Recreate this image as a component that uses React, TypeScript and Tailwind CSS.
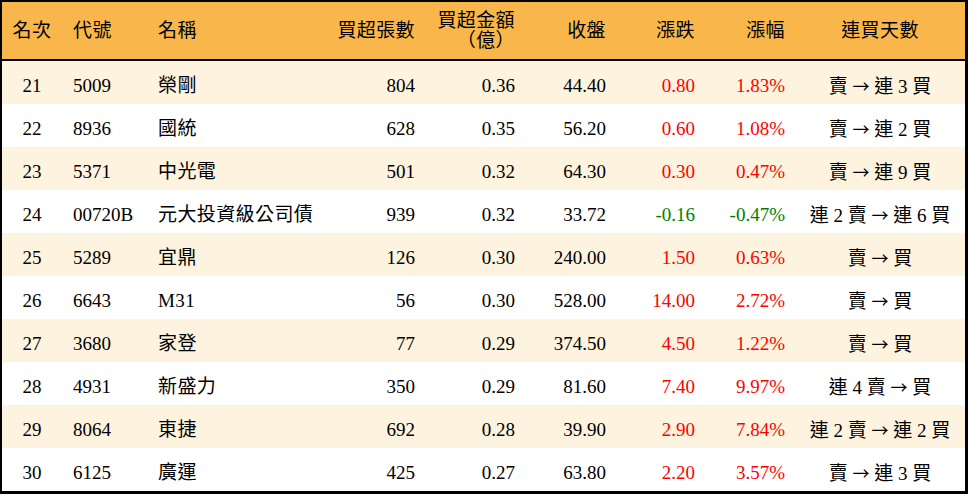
const rows = [
  { rank: 21, code: "5009", name: "榮剛", vol: "804", amt: "0.36", close: "44.40", chg: "0.80", pct: "1.83%", from: "賣", to: "連 3 買" },
  { rank: 22, code: "8936", name: "國統", vol: "628", amt: "0.35", close: "56.20", chg: "0.60", pct: "1.08%", from: "賣", to: "連 2 買" },
  { rank: 23, code: "5371", name: "中光電", vol: "501", amt: "0.32", close: "64.30", chg: "0.30", pct: "0.47%", from: "賣", to: "連 9 買" },
  { rank: 24, code: "00720B", name: "元大投資級公司債", vol: "939", amt: "0.32", close: "33.72", chg: "-0.16", pct: "-0.47%", from: "連 2 賣", to: "連 6 買" },
  { rank: 25, code: "5289", name: "宜鼎", vol: "126", amt: "0.30", close: "240.00", chg: "1.50", pct: "0.63%", from: "賣", to: "買" },
  { rank: 26, code: "6643", name: "M31", vol: "56", amt: "0.30", close: "528.00", chg: "14.00", pct: "2.72%", from: "賣", to: "買" },
  { rank: 27, code: "3680", name: "家登", vol: "77", amt: "0.29", close: "374.50", chg: "4.50", pct: "1.22%", from: "賣", to: "買" },
  { rank: 28, code: "4931", name: "新盛力", vol: "350", amt: "0.29", close: "81.60", chg: "7.40", pct: "9.97%", from: "連 4 賣", to: "買" },
  { rank: 29, code: "8064", name: "東捷", vol: "692", amt: "0.28", close: "39.90", chg: "2.90", pct: "7.84%", from: "連 2 賣", to: "連 2 買" },
  { rank: 30, code: "6125", name: "廣運", vol: "425", amt: "0.27", close: "63.80", chg: "2.20", pct: "3.57%", from: "賣", to: "連 3 買" },
];

const cols = "grid grid-cols-[60px_88px_180px_95px_100px_91px_89px_90px_170px]";

export default function App() {
  return (
    <div
      className="w-[968px] h-[496px] bg-white text-black text-[19px]"
      style={{ fontFamily: '"Liberation Serif", "Noto Sans CJK TC", serif' }}
    >
      <div className="border-black border-t-2 border-l-2 border-r-[3px] border-b-[3px]">
        {/* Header */}
        <div className={`${cols} h-[59px] items-center bg-[#f9b74b] border-b-2 border-black leading-[20px] tracking-[0.4px]`}>
          <div className="text-center">名次</div>
          <div className="pl-[11px]">代號</div>
          <div className="pl-[8px]">名稱</div>
          <div className="text-right pr-[10px]">買超張數</div>
          <div className="text-right pr-[10px]">
            <div>買超金額</div>
            <div>（億）</div>
          </div>
          <div className="text-right pr-[10px]">收盤</div>
          <div className="text-right pr-[10px]">漲跌</div>
          <div className="text-right pr-[10px]">漲幅</div>
          <div className="text-center">連買天數</div>
        </div>

        {/* Rows */}
        {rows.map((r, i) => {
          const neg = r.chg.startsWith("-");
          const color = neg ? "text-[#008000]" : "text-[#ff0000]";
          return (
            <div
              key={r.rank}
              className={`${cols} h-[43px] pt-[7px] items-center leading-[22px] ${i % 2 === 0 ? "bg-[#fef3de]" : "bg-white"}`}
            >
              <div className="text-center">{r.rank}</div>
              <div className="pl-[11px]">{r.code}</div>
              <div className="pl-[8px] whitespace-nowrap tracking-[0.4px]">{r.name}</div>
              <div className="text-right pr-[10px]">{r.vol}</div>
              <div className="text-right pr-[10px]">{r.amt}</div>
              <div className="text-right pr-[10px]">{r.close}</div>
              <div className={`text-right pr-[10px] ${color}`}>{r.chg}</div>
              <div className={`text-right pr-[10px] ${color}`}>{r.pct}</div>
              <div className="text-center whitespace-nowrap">
                {r.from} <span className="font-['Noto_Sans_CJK_TC'] text-[17px]">→</span> {r.to}
              </div>
            </div>
          );
        })}
      </div>
    </div>
  );
}
